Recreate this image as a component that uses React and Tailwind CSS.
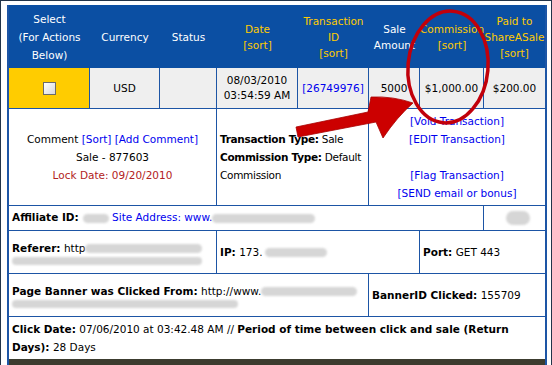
import React from 'react';

const B = 'border-[#1d55a5]';

function Blur({ w, h = 9, className = '' }) {
  return (
    <span
      className={`inline-block align-middle rounded-full bg-[#d6d6d6] blur-[1px] ${className}`}
      style={{ width: w, height: h }}
    />
  );
}

export default function App() {
  return (
    <div className="relative w-[552px] h-[365px] overflow-hidden bg-white border-l border-t border-r border-[#22344a] pl-[6px] pt-[4px] pr-[4px] font-['DejaVu_Sans',sans-serif] text-[10.5px] text-black">
      <div className={`w-[540px] border-l-2 border-r-2 ${B}`}>
        {/* Header */}
        <div className="grid grid-cols-[81px_70px_57px_81px_71px_51px_64px_61px] h-[63px] bg-[#0b4fa3] leading-[16px] text-center">
          <div className="flex items-center justify-center text-white leading-[18px]">
            Select<br />(For Actions<br />Below)
          </div>
          <div className="flex items-center justify-center text-white">Currency</div>
          <div className="flex items-center justify-center text-white">Status</div>
          <div className="flex items-center justify-center text-[#ffcc00]">
            Date<br />[sort]
          </div>
          <div className="flex items-center justify-center text-[#ffcc00]">
            Transaction<br />ID<br />[sort]
          </div>
          <div className="flex items-center justify-center text-white">
            Sale<br />Amount
          </div>
          <div className="flex items-center justify-center text-[#ffcc00]">
            Commission<br />[sort]
          </div>
          <div className="flex items-center justify-center text-[#ffcc00] whitespace-nowrap">
            Paid to<br />ShareASale<br />[sort]
          </div>
        </div>

        {/* Row 1 */}
        <div className={`grid grid-cols-[81px_70px_57px_81px_71px_51px_64px_61px] h-[41px] border-b ${B} bg-[#efefef] text-center leading-[15px]`}>
          <div className={`flex items-center justify-center bg-[#ffcc00] border-r ${B}`}>
            <span className="block w-[13px] h-[13px] border border-[#6b6b6b] bg-gradient-to-br from-white to-[#d8d8d8]" />
          </div>
          <div className={`flex items-center justify-center border-r ${B}`}>USD</div>
          <div className={`border-r ${B}`} />
          <div className={`flex items-center justify-center border-r ${B} whitespace-nowrap`}>
            08/03/2010<br />03:54:59 AM
          </div>
          <div className={`flex items-center justify-center border-r ${B} text-[#0000ee]`}>[26749976]</div>
          <div className={`flex items-center justify-center border-r ${B}`}>5000</div>
          <div className={`flex items-center justify-center border-r ${B}`}>$1,000.00</div>
          <div className="flex items-center justify-center">$200.00</div>
        </div>

        {/* Row 2 */}
        <div className={`flex h-[97px] border-b ${B} leading-[18px]`}>
          <div className={`w-[208px] flex flex-col items-center justify-center text-center border-r ${B}`}>
            <div>
              Comment <span className="text-[#0000ee]">[Sort] [Add Comment]</span>
            </div>
            <div>Sale - 877603</div>
            <div className="text-[#b22222]">Lock Date: 09/20/2010</div>
          </div>
          <div className={`w-[152px] flex flex-col justify-center pl-[3px] border-r ${B} whitespace-nowrap overflow-hidden tracking-[-0.3px]`}>
            <div><b>Transaction Type:</b> Sale</div>
            <div><b>Commission Type:</b> Default</div>
            <div>Commission</div>
          </div>
          <div className="w-[176px] flex flex-col items-center justify-center text-center text-[#0000ee]">
            <div>[Void Transaction]</div>
            <div>[EDIT Transaction]</div>
            <div>&nbsp;</div>
            <div>[Flag Transaction]</div>
            <div>[SEND email or bonus]</div>
          </div>
        </div>

        {/* Row 3 */}
        <div className={`flex h-[25px] border-b ${B}`}>
          <div className={`w-[475px] flex items-center pl-[3px] border-r ${B} whitespace-nowrap overflow-hidden`}>
            <b>Affiliate ID:</b>
            <Blur w={26} className="ml-[4px]" />
            <span className="text-[#0000ee]">&nbsp;Site Address: www.</span>
            <Blur w={103} />
          </div>
          <div className="w-[61px] flex items-center justify-center">
            <Blur w={24} h={14} className="ml-[6px]" />
          </div>
        </div>

        {/* Row 4 */}
        <div className={`flex h-[43px] border-b ${B} leading-[18px]`}>
          <div className={`w-[208px] flex flex-col justify-center pl-[3px] border-r ${B} whitespace-nowrap`}>
            <div className="flex items-center">
              <b>Referer:</b>&nbsp;http<Blur w={117} />
            </div>
            <div className="flex items-center">
              <Blur w={190} h={8} />
            </div>
          </div>
          <div className={`w-[203px] flex items-center pl-[3px] border-r ${B} whitespace-nowrap`}>
            <b>IP:</b>&nbsp;173.<Blur w={62} className="ml-[2px]" />
          </div>
          <div className="w-[125px] flex items-center pl-[3px]">
            <b>Port:</b>&nbsp;GET 443
          </div>
        </div>

        {/* Row 5 */}
        <div className={`flex h-[43px] border-b ${B} leading-[18px]`}>
          <div className={`w-[360px] flex flex-col justify-center pl-[3px] border-r ${B} whitespace-nowrap overflow-hidden`}>
            <div className="flex items-center">
              <b>Page Banner was Clicked From:</b>&nbsp;http://www.<Blur w={96} />
            </div>
            <div className="flex items-center">
              <Blur w={226} h={8} />
            </div>
          </div>
          <div className="w-[176px] flex items-center pl-[3px]">
            <b>BannerID Clicked:</b>&nbsp;155709
          </div>
        </div>

        {/* Row 6 */}
        <div className="h-[42px] flex flex-col justify-center pl-[3px] leading-[18px] whitespace-nowrap">
          <div>
            <b>Click Date:</b> 07/06/2010 at 03:42.48 AM // <b>Period of time between click and sale (Return</b>
          </div>
          <div>
            <b>Days):</b> 28 Days
          </div>
        </div>

        <div className="h-[8px] bg-[#3c3c2f]" />
      </div>

      {/* Annotation */}
      <svg className="absolute left-0 top-0 pointer-events-none" width="552" height="365" viewBox="0 0 552 365">
        <ellipse cx="447" cy="66" rx="40" ry="56" fill="none" stroke="#c1000b" strokeWidth="3.5" transform="rotate(5 447 66)" />
        <path
          d="M412,102 Q392,95 370,96 L367,111 L295,126 L297,136 L375,121 L382,137 Q396,116 412,102 Z"
          fill="#cc0000"
          stroke="#a80000"
          strokeWidth="0.8"
          strokeLinejoin="round"
        />
      </svg>
    </div>
  );
}
